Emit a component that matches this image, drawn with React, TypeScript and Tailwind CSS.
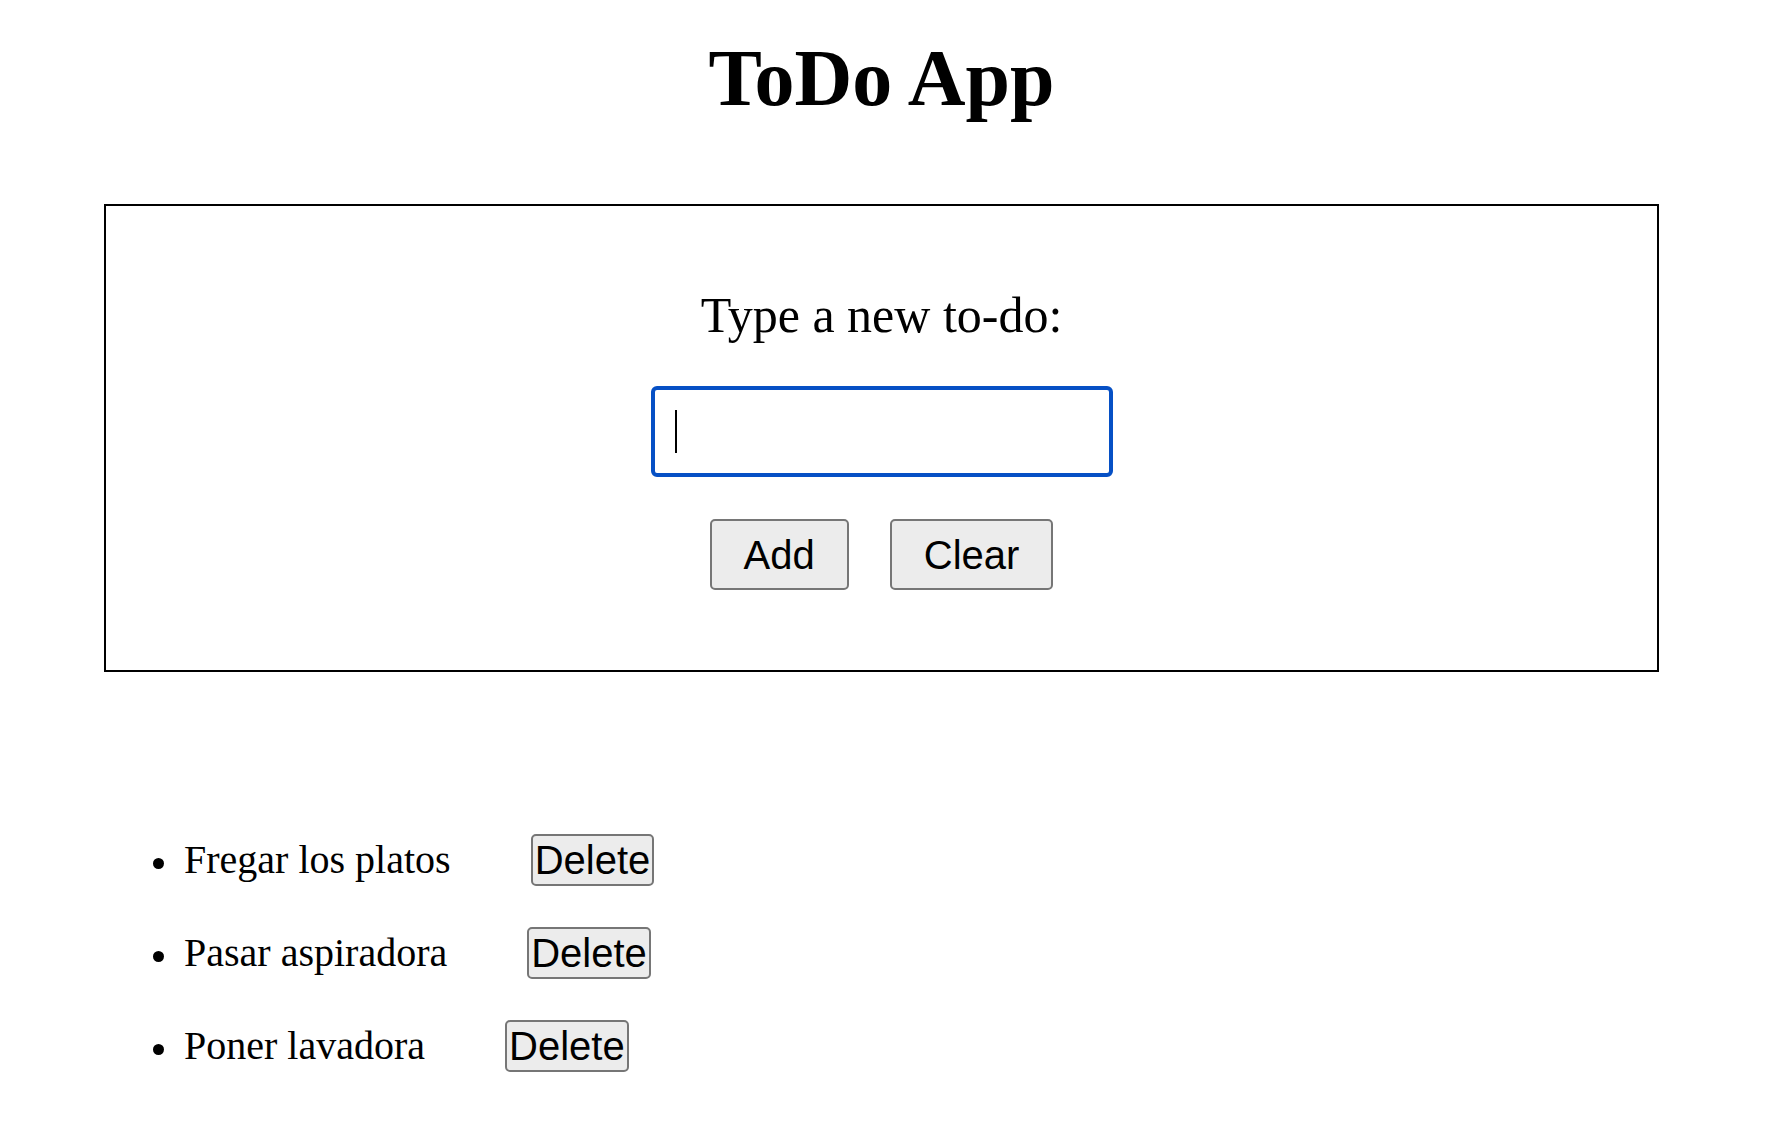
import React, { useState } from "react";

function App() {
  const [text, setText] = useState("");
  const [todos, setTodos] = useState<string[]>([
    "Fregar los platos",
    "Pasar aspiradora",
    "Poner lavadora",
  ]);

  const handleAdd = () => {
    if (!text.trim()) return;
    setTodos([...todos, text.trim()]);
    setText("");
  };

  const handleDelete = (index: number) => {
    setTodos(todos.filter((_, i) => i !== index));
  };

  return (
    <div className="min-h-screen bg-white text-black font-['Liberation_Serif',serif] pl-[104px] pr-[110px] pt-[33px]">
      <h1 className="text-center text-[80px] leading-[90px] font-bold">ToDo App</h1>

      <div className="mt-[81px] border-2 border-black flex flex-col items-center pt-[81px] pb-[80px]">
        <label htmlFor="todo" className="text-[50px] leading-[56px]">
          Type a new to-do:
        </label>
        <div className="relative mt-[43px]">
          <input
            id="todo"
            type="text"
            value={text}
            onChange={(e) => setText(e.target.value)}
            className="w-[462px] h-[91px] border-[4px] border-[#0650c5] rounded-[6px] px-[20px] text-[40px] font-['Liberation_Sans',sans-serif] outline-none caret-transparent"
          />
          {text === "" && (
            <span className="absolute left-[24px] top-[24px] w-[2px] h-[43px] bg-black"></span>
          )}
        </div>
        <div className="flex gap-[41px] mt-[42px]">
          <button
            onClick={handleAdd}
            className="h-[71px] px-[32px] bg-[#ececec] border-2 border-[#767676] rounded-[5px] text-[40px] leading-[46px] font-['Liberation_Sans',sans-serif]"
          >
            Add
          </button>
          <button
            onClick={() => setText("")}
            className="h-[71px] px-[32px] bg-[#ececec] border-2 border-[#767676] rounded-[5px] text-[40px] leading-[46px] font-['Liberation_Sans',sans-serif]"
          >
            Clear
          </button>
        </div>
      </div>

      <ul className="mt-[162px] flex flex-col gap-[41px] pl-[49px]">
        {todos.map((todo, i) => (
          <li key={i} className="flex items-center h-[52px]">
            <span className="w-[11px] h-[11px] rounded-full bg-black mt-[6px]"></span>
            <span className="ml-[20px] text-[40px] leading-[46px]">{todo}</span>
            <button
              onClick={() => handleDelete(i)}
              className="ml-[80px] h-[52px] px-[2px] bg-[#ececec] border-2 border-[#767676] rounded-[5px] text-[40px] leading-[46px] font-['Liberation_Sans',sans-serif]"
            >
              Delete
            </button>
          </li>
        ))}
      </ul>
    </div>
  );
}

export default App;
